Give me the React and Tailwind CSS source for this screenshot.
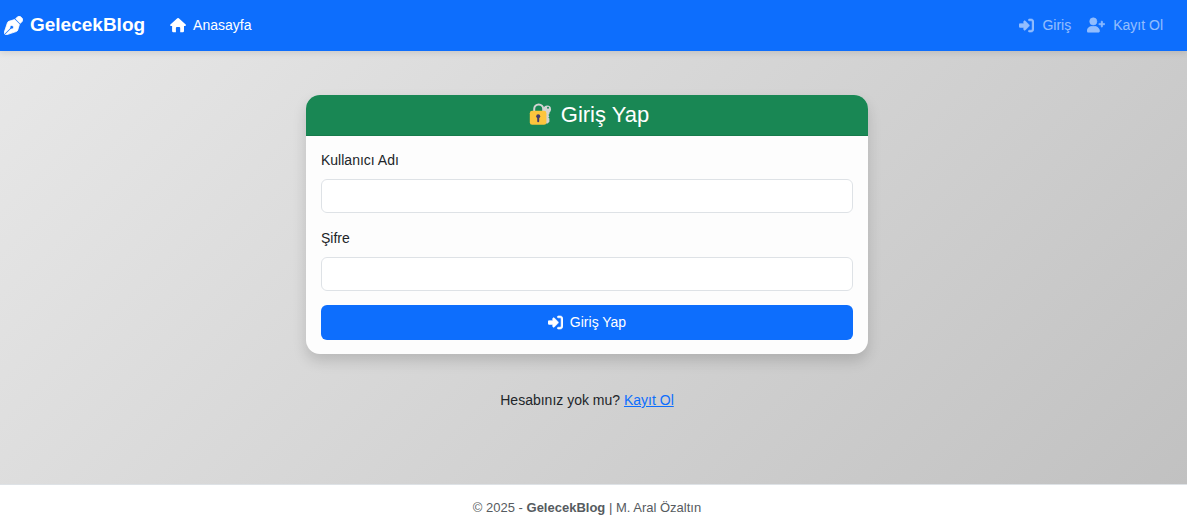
import { FaPenNib, FaRightToBracket, FaUserPlus } from "react-icons/fa6";

function HouseIcon() {
  return (
    <svg viewBox="0 0 16 16" className="size-4" fill="currentColor" aria-hidden="true">
      <path d="M7.3 1.3a1.1 1.1 0 0 1 1.5 0l6.9 6.1c.6.6.2 1.6-.6 1.6H14v5a1.2 1.2 0 0 1-1.2 1.2H10.200V11a1 1 0 0 0-1-1H6.900a1 1 0 0 0-1 1v4.200H3.300A1.200 1.200 0 0 1 2.100 14V9H1C.1 9-.2 8 .4 7.400z" />
    </svg>
  );
}

function LockKeyIcon() {
  return (
    <svg viewBox="0 0 24 24" className="h-6 w-6" aria-hidden="true">
      <g fill="#d3d3d3">
        <circle cx="18.3" cy="6.2" r="3.7" />
        <path d="M16.600 8h3.800v3l-1 1.100 1 1.100-1 1.200 1 1.200v3.200l-1.800 1.800h-2z" />
      </g>
      <circle cx="19" cy="4.8" r="1" fill="#198754" />
      <path d="M5.2 10V6a4.5 4.5 0 0 1 9 0V10" fill="none" stroke="#d3d3d3" strokeWidth="2" />
      <rect x="0.8" y="7.8" width="16.6" height="14" rx="2.4" fill="#fcc53d" />
      <circle cx="9.2" cy="13.2" r="2" fill="#433b6b" />
      <path d="M8.2 14h2v4.2a1 1 0 0 1-2 0z" fill="#433b6b" />
    </svg>
  );
}

function Field({ id, label, type }) {
  return (
    <div className="mb-3.5">
      <label htmlFor={id} className="mb-2 block">
        {label}
      </label>
      <input
        id={id}
        name={id}
        type={type}
        className="block h-[34px] w-full rounded-md border border-[#dee2e6] bg-white px-3 outline-none focus:border-[#86b7fe]"
      />
    </div>
  );
}

export default function App() {
  return (
    <div className="flex min-h-screen flex-col bg-linear-[135deg,#e9e9e9,#c0c0c0] font-['Liberation_Sans',Arial,sans-serif] text-[14px] leading-[22px] text-[#212529]">
      <nav className="relative flex h-[51px] items-center bg-[#0d6efd] pr-6 pb-px pl-1 text-white shadow-[0_2px_6px_rgba(0,0,0,0.1)]">
        <a href="#home" className="flex items-center gap-[7px] text-[19px] font-bold">
          <FaPenNib className="size-[19px] stroke-current stroke-[20]" />
          GelecekBlog
        </a>
        <a href="#home" className="ml-[25px] flex items-center gap-[7px]">
          <HouseIcon />
          Anasayfa
        </a>
        <div className="ml-auto flex items-center gap-4">
          <a href="#login" className="flex items-center gap-2 opacity-55">
            <FaRightToBracket className="size-[15px] stroke-current stroke-[20]" />
            Giriş
          </a>
          <a href="#register" className="flex items-center gap-2 opacity-55">
            <FaUserPlus className="size-[18px] stroke-current stroke-[20]" />
            Kayıt Ol
          </a>
        </div>
      </nav>

      <main className="flex flex-1 flex-col items-center pt-11 pr-[13px]">
        <section className="w-full max-w-[562px] overflow-hidden rounded-[14px] bg-[#fdfdfd] shadow-[0_7px_14px_rgba(0,0,0,0.15)]">
          <h1 className="flex h-[41px] items-center justify-center gap-2 border-b border-[#177b4c] bg-[#198754] pl-1 text-[22px] text-white">
            <LockKeyIcon />
            Giriş Yap
          </h1>
          <form className="px-[15px] pt-[13px] pb-3.5" onSubmit={(e) => e.preventDefault()}>
            <Field id="username" label="Kullanıcı Adı" type="text" />
            <Field id="password" label="Şifre" type="password" />
            <button
              type="submit"
              className="flex h-[35px] w-full items-center justify-center gap-[7px] rounded-md bg-[#0d6efd] pb-px text-white"
            >
              <FaRightToBracket className="size-[15px] stroke-current stroke-[20]" />
              Giriş Yap
            </button>
          </form>
        </section>
        <p className="my-[35px]">
          Hesabınız yok mu?{" "}
          <a href="#register" className="text-[#0d6efd] underline">
            Kayıt Ol
          </a>
        </p>
      </main>

      <footer className="flex h-[46px] items-center justify-center border-t border-[#dee2e6] bg-white pr-[13px] text-[13px] text-[#565b60]">
        <p>
          © 2025 - <strong>GelecekBlog</strong> | M. Aral Özaltın
        </p>
      </footer>
    </div>
  );
}
